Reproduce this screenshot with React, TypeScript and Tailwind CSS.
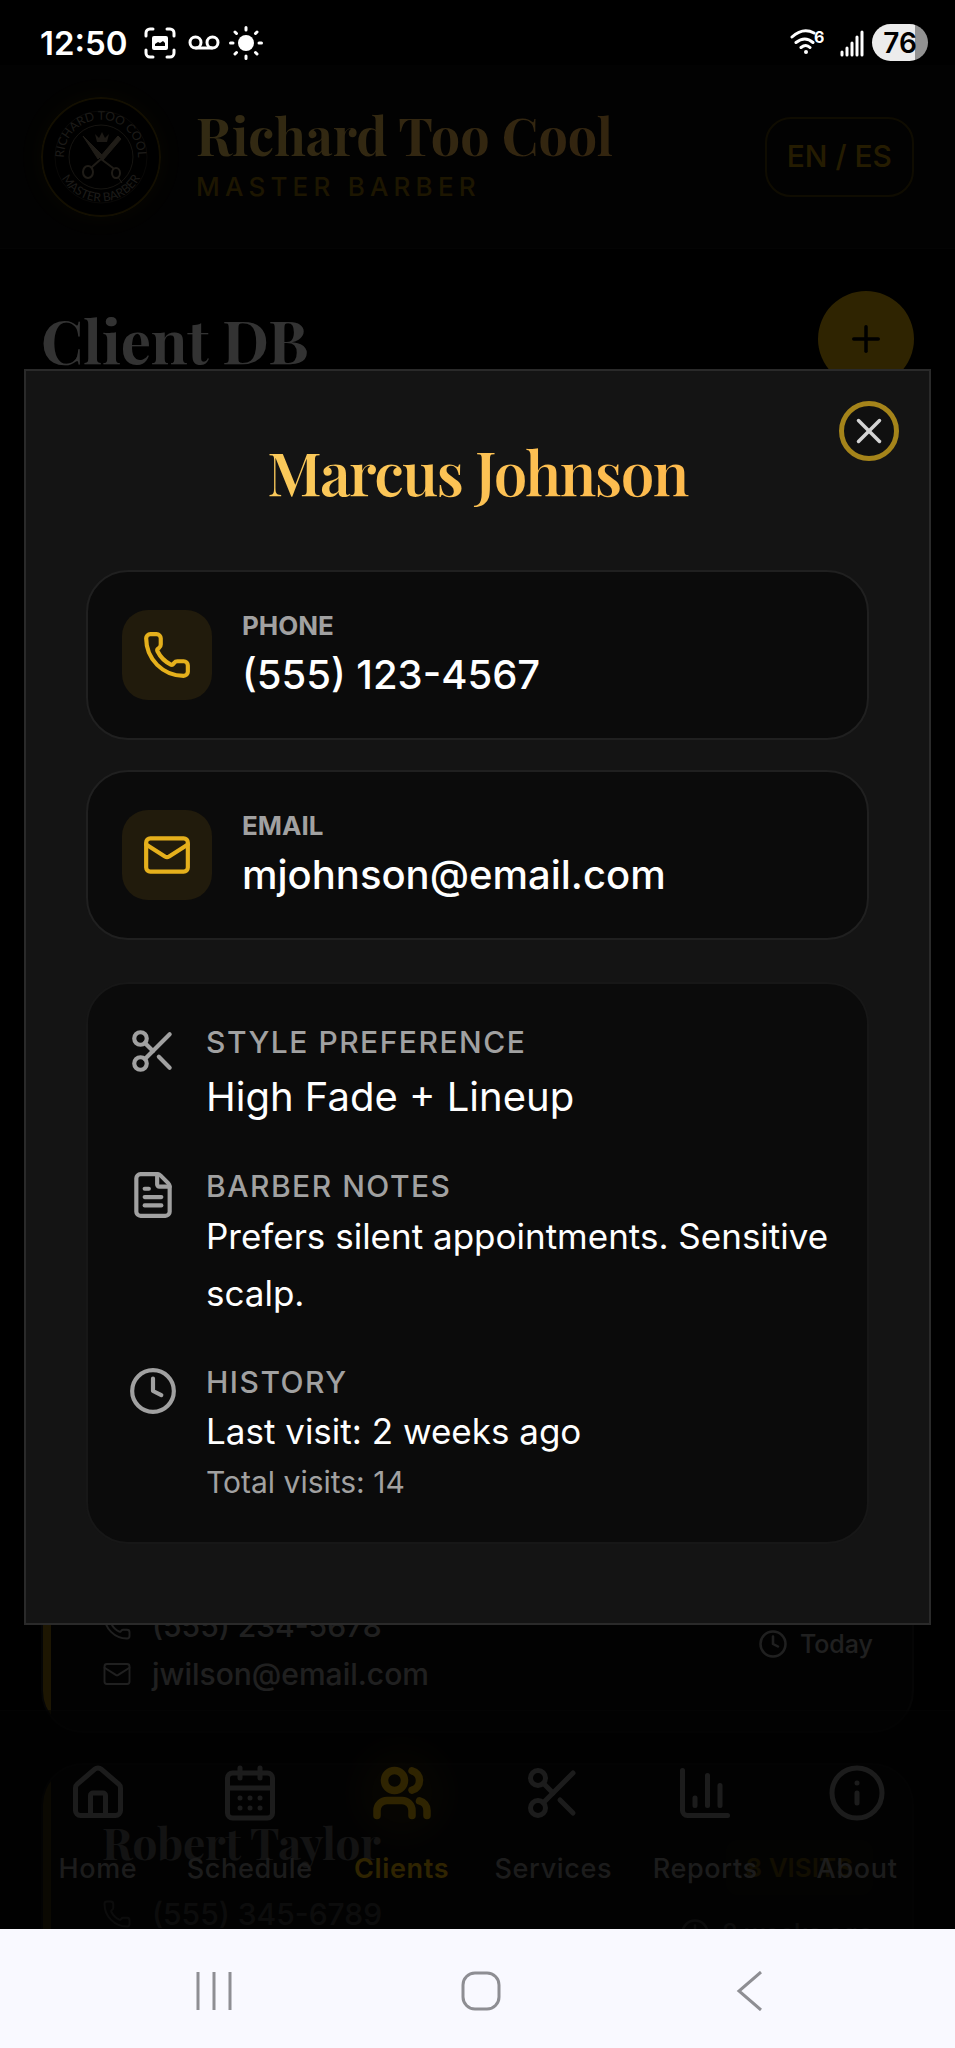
import type { ReactNode } from "react";
import {
  CalendarDays,
  ChartNoAxesColumn,
  Clock,
  FileText,
  House,
  Info,
  Mail,
  Phone,
  Plus,
  Scissors,
  Users,
  X,
} from "lucide-react";

const sans = "font-['Inter','Roboto',sans-serif]";
const serif = "font-['Playfair_Display','Liberation_Serif',serif]";

function StatusBar() {
  return (
    <div className="flex h-[65px] shrink-0 items-center justify-between bg-black pt-5 pr-[27px] pl-10 text-white">
      <div className="flex items-center gap-2">
        <span className="mr-2 text-[33px] leading-[40px] font-semibold">12:50</span>
        <svg className="h-8 w-8" viewBox="0 0 32 32" fill="none" stroke="currentColor" strokeWidth="3" strokeLinecap="round">
          <path d="M2 9V6a4 4 0 0 1 4-4h3M23 2h3a4 4 0 0 1 4 4v3M30 23v3a4 4 0 0 1-4 4h-3M9 30H6a4 4 0 0 1-4-4v-3" />
          <rect x="8" y="9" width="16" height="14" rx="2" fill="currentColor" stroke="none" />
          <path d="M11 19v-2l3-2 2 1 3-2 2 2v3z" fill="#000" stroke="none" />
        </svg>
        <svg className="ml-1 h-8 w-8" viewBox="0 0 32 32" fill="none" stroke="currentColor" strokeWidth="3">
          <circle cx="7.5" cy="15.5" r="5.5" />
          <circle cx="24.5" cy="15.5" r="5.5" />
          <path d="M7.5 21h17" />
        </svg>
        <svg className="h-9 w-9" viewBox="0 0 36 36" stroke="currentColor" strokeWidth="3" strokeLinecap="round">
          <circle cx="18" cy="18" r="8" fill="currentColor" stroke="none" />
          <path d="M18 2.500v2.500M18 31v2.500M2.500 18H5M31 18h2.500M7 7l1.500 1.500M27.500 27.500 29 29M29 7l-1.500 1.500M8.500 27.500 7 29" />
        </svg>
      </div>
      <div className="flex items-center gap-2">
        <svg className="mr-2 h-8 w-9" viewBox="0 0 36 32" fill="none" stroke="currentColor" strokeWidth="3" strokeLinecap="round">
          <path d="M4 10Q15 0 26 6M8 15.500q9-7 17 0M13 20.500q5-4 9 0" />
          <circle cx="18" cy="25" r="2" fill="currentColor" stroke="none" />
          <text x="26" y="16" fontSize="16" fontWeight="700" fill="currentColor" stroke="none">6</text>
        </svg>
        <svg className="h-7 w-6" viewBox="0 0 24 28" stroke="currentColor" strokeWidth="3" strokeLinecap="round">
          <path d="M2 26v-3M7 26v-7M12 26V14M17 26V8M22 26V3" />
        </svg>
        <span className="flex h-[37px] w-14 items-center justify-center rounded-full bg-linear-to-r from-[#ececec] from-76% to-[#929292] to-76% text-[28px] font-semibold text-black">
          76
        </span>
      </div>
    </div>
  );
}

function Logo() {
  return (
    <svg className="h-[120px] w-[120px] rounded-full shadow-[0_0_20px_rgba(234,179,8,0.15)]" viewBox="0 0 120 120" fill="none">
      <defs>
        <path id="arc-top" d="M23.600 66.400A37 37 0 1 1 96.400 66.400" />
        <path id="arc-bottom" d="M15.500 60a44.500 44.500 0 0 0 89 0" />
      </defs>
      <circle cx="60" cy="60" r="59" fill="#000" stroke="#eab308" strokeOpacity=".4" strokeWidth="2" />
      <g stroke="#8a7d68">
        <circle cx="60" cy="60" r="46" strokeOpacity=".35" />
        <circle cx="60" cy="60" r="32" strokeOpacity=".8" />
      </g>
      <g fill="#8a8478" fontSize="12" className="font-['Lato',sans-serif]" textAnchor="middle">
        <text>
          <textPath href="#arc-top" startOffset="50%">RICHARD TOO COOL</textPath>
        </text>
        <text>
          <textPath href="#arc-bottom" startOffset="50%">MASTER BARBER</textPath>
        </text>
      </g>
      <g stroke="#9b8c73">
        <path d="m59 60 18-21 3 3-18 21zM61 58 42 39l15 23z" fill="#9b8c73" strokeWidth="1" strokeLinejoin="round" />
        <path d="M60 62 72 71M60 62 51 70" strokeWidth="2" strokeLinecap="round" />
        <ellipse cx="47" cy="75" rx="5" ry="6" strokeWidth="2" />
        <ellipse cx="75" cy="76" rx="4" ry="5" strokeWidth="2" />
        <path d="m77 80 4 6" />
      </g>
      <path d="m56 45-2-8 4 4 3-6 3 6 4-4-2 8z" fill="#8a7d68" />
    </svg>
  );
}

function Header() {
  return (
    <header className="flex h-[184px] items-center justify-between border-b border-white/5 bg-[#0a0a0a] px-[41px]">
      <div className="flex items-center gap-[35px]">
        <Logo />
        <div className="flex flex-col gap-2">
          <p className={`${serif} bg-linear-to-r from-[#f8d060] to-[#ffb84d] bg-clip-text text-[52px] leading-[52px] font-bold text-transparent`}>
            Richard Too Cool
          </p>
          <p className="text-[26px] leading-[36px] font-medium tracking-[0.2em] text-[#eab308]/60">MASTER BARBER</p>
        </div>
      </div>
      <button type="button" className="h-20 rounded-[26px] border-2 border-[#eab308]/30 px-5 text-[30px] font-medium text-[#eab308]/80">
        EN / ES
      </button>
    </header>
  );
}

type ClientCardProps = {
  name?: string;
  visits?: string;
  phone: string;
  email?: string;
  last: string;
};

function ClientCard({ name, visits, phone, email, last }: ClientCardProps) {
  return (
    <article
      className={`relative flex justify-between overflow-hidden rounded-[42px] border-2 border-white/5 bg-[#0e0e0e] py-[33px] pr-[39px] pl-[59px] ${name ? "min-h-[259px]" : ""}`}
    >
      <span className="absolute inset-y-0 left-0 w-2 bg-[#eab308]/60" />
      <div className="flex flex-col">
        {name && <h2 className={`${serif} mb-1 text-[44px] leading-[88px] font-bold text-white`}>{name}</h2>}
        <p className="flex h-12 items-center gap-5 text-[30px] font-medium text-neutral-400">
          <Phone size={30} strokeWidth={1.5} />
          {phone}
        </p>
        {email && (
          <p className="flex h-12 items-center gap-5 text-[30px] font-medium text-neutral-400">
            <Mail size={30} strokeWidth={1.5} />
            {email}
          </p>
        )}
      </div>
      <div className="flex flex-col items-end justify-end gap-5 pb-9">
        {visits && (
          <span className="rounded-xl bg-[#eab308]/10 px-5 py-2 text-[26px] leading-[39px] font-semibold text-[#eab308]">{visits}</span>
        )}
        <p className="flex items-center gap-3 text-[25px] leading-9 font-medium text-neutral-400">
          <Clock size={30} strokeWidth={2} />
          {last}
        </p>
      </div>
    </article>
  );
}

const tabs = [
  { label: "Home", Icon: House },
  { label: "Schedule", Icon: CalendarDays },
  { label: "Clients", Icon: Users, active: true },
  { label: "Services", Icon: Scissors },
  { label: "Reports", Icon: ChartNoAxesColumn },
  { label: "About", Icon: Info },
];

function ReportsIcon() {
  return (
    <svg className="h-[60px] w-[60px]" viewBox="0 0 24 24" fill="none" stroke="currentColor" strokeWidth="2" strokeLinecap="round" strokeLinejoin="round">
      <path d="M3 3v16a2 2 0 0 0 2 2h16M8 17v-3M13 17V5M18 17V9" />
    </svg>
  );
}

function BottomNav() {
  return (
    <nav className="absolute inset-x-0 bottom-0 flex h-[219px] items-start justify-between border-t border-white/5 bg-[#0a0a0a]/65 px-[22px] pt-[52px]">
      {tabs.map(({ label, Icon, active }) => (
        <a
          key={label}
          href="#"
          className={`flex w-[152px] flex-col items-center gap-7 text-[27px] leading-9 tracking-[0.025em] ${active ? "font-semibold text-[#eab308]" : "font-medium text-[#8c8c8c]"}`}
        >
          <span className={active ? "rounded-full bg-[#eab308]/10 shadow-[0_0_32px_16px_rgba(234,179,8,0.1)]" : ""}>
            {label === "Reports" ? <ReportsIcon /> : <Icon size={60} strokeWidth={active ? 3 : 2} />}
          </span>
          {label}
        </a>
      ))}
    </nav>
  );
}

function ContactCard({ icon, label, value, href }: { icon: ReactNode; label: string; value: string; href: string }) {
  return (
    <a href={href} className="flex items-center gap-[30px] rounded-[42px] border-2 border-[#202020] bg-[#0b0b0b] px-[34px] py-9">
      <span className="flex h-[90px] w-[90px] shrink-0 items-center justify-center rounded-[26px] bg-[#211b0c] text-[#e5b01c]">
        {icon}
      </span>
      <span className="flex flex-col gap-1">
        <span className="text-[26px] leading-9 font-bold text-neutral-400">{label}</span>
        <span className="text-[40px] leading-[54px] font-medium text-white">{value}</span>
      </span>
    </a>
  );
}

function DetailRow({ icon, label, children }: { icon: ReactNode; label: string; children: ReactNode }) {
  return (
    <div className="flex gap-7">
      <span className="mt-1.5 shrink-0 text-neutral-400">{icon}</span>
      <div>
        <h3 className="text-[30px] leading-[44px] font-medium tracking-[0.05em] text-neutral-400">{label}</h3>
        {children}
      </div>
    </div>
  );
}

function ClientDialog() {
  return (
    <div className="absolute inset-0 flex items-center justify-center bg-black/80 px-6">
      <div role="dialog" aria-labelledby="client-name" className="relative w-full border-2 border-[#2a2a2a] bg-[#141414] px-[60px] pt-[60px] pb-[79px]">
        <button
          type="button"
          aria-label="Close"
          className="absolute top-[30px] right-[30px] flex h-[60px] w-[60px] items-center justify-center rounded-full border-[5px] border-[#a5841a] bg-[#101010] text-neutral-300"
        >
          <X size={42} strokeWidth={2} />
        </button>
        <h2
          id="client-name"
          className={`${serif} mb-[59px] bg-linear-to-r from-[#f8d060] to-[#ffb347] bg-clip-text text-center text-[60px] leading-20 font-semibold tracking-tight text-transparent`}
        >
          Marcus Johnson
        </h2>
        <div className="flex flex-col gap-[30px]">
          <ContactCard icon={<Phone size={50} />} label="PHONE" value="(555) 123-4567" href="tel:5551234567" />
          <ContactCard icon={<Mail size={50} />} label="EMAIL" value="mjohnson@email.com" href="mailto:mjohnson@email.com" />
        </div>
        <div className="mt-[42px] flex flex-col gap-[38px] rounded-[42px] border-2 border-[#171717] bg-[#0b0b0b] py-9 pr-6 pl-10">
          <DetailRow icon={<Scissors size={50} />} label="STYLE PREFERENCE">
            <p className="mt-1 text-[40px] leading-[58px] text-white">High Fade + Lineup</p>
          </DetailRow>
          <DetailRow icon={<FileText size={50} />} label="BARBER NOTES">
            <p className="text-[35px] leading-[57px] text-white">Prefers silent appointments. Sensitive scalp.</p>
          </DetailRow>
          <DetailRow icon={<Clock size={50} />} label="HISTORY">
            <p className="text-[35px] leading-[54px] text-white">Last visit: 2 weeks ago</p>
            <p className="text-[30px] leading-[48px] text-neutral-400">Total visits: 14</p>
          </DetailRow>
        </div>
      </div>
    </div>
  );
}

function SystemNav() {
  const button = "flex h-20 flex-1 items-center justify-center";
  return (
    <div className="flex h-[119px] shrink-0 items-center justify-center bg-[#f9f9ff] pt-1 pr-[74px] pl-20 text-[#8e8e93]">
      <button type="button" aria-label="Recent apps" className={button}>
        <svg className="h-10 w-10" viewBox="0 0 40 40" stroke="currentColor" strokeWidth="3">
          <path d="M4 1v38M20 1v38M36 1v38" />
        </svg>
      </button>
      <button type="button" aria-label="Home screen" className={button}>
        <svg className="h-10 w-10" viewBox="0 0 40 40" fill="none" stroke="currentColor" strokeWidth="3">
          <rect x="2" y="2" width="36" height="36" rx="12" />
        </svg>
      </button>
      <button type="button" aria-label="Back" className={button}>
        <svg className="h-10 w-10" viewBox="0 0 40 40" fill="none" stroke="currentColor" strokeWidth="3">
          <path d="M33 1 11 20l22 19" />
        </svg>
      </button>
    </div>
  );
}

export default function App() {
  return (
    <div className={`${sans} flex h-screen flex-col overflow-hidden bg-black`}>
      <StatusBar />
      <div className="relative flex-1 overflow-hidden bg-black">
        <Header />
        <main className="px-[41px] pt-[42px]">
          <div className="flex items-center justify-between">
            <h1 className={`${serif} text-[60px] leading-[96px] font-bold text-white`}>Client DB</h1>
            <button type="button" aria-label="Add client" className="flex h-24 w-24 items-center justify-center rounded-full bg-[#eab308] text-black">
              <Plus size={42} strokeWidth={2} />
            </button>
          </div>
          <div className="mt-[1180px] flex flex-col gap-[30px]">
            <ClientCard phone="(555) 234-5678" email="jwilson@email.com" last="Today" />
            <ClientCard name="Robert Taylor" visits="8 VISITS" phone="(555) 345-6789" last="2 weeks ago" />
          </div>
        </main>
        <BottomNav />
        <ClientDialog />
      </div>
      <SystemNav />
    </div>
  );
}
